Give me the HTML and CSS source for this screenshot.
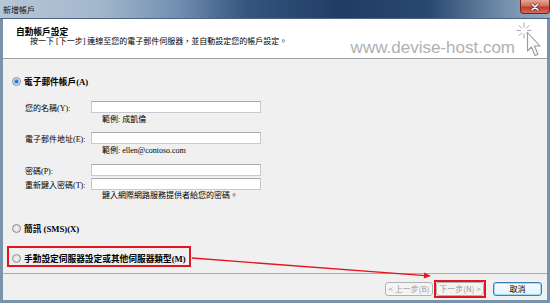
FILE: index.html
```html
<!DOCTYPE html>
<html lang="zh-Hant">
<head>
  <meta charset="UTF-8">
  <title>新增帳戶</title>
  <link rel="stylesheet" href="styles.css">
</head>
<body>
  <div class="window">
    <div class="titlebar">
      <span class="title">新增帳戶</span>
      <span class="close">
        <svg width="10" height="8" viewBox="0 0 10 8">
          <path d="M2 1 L8 7 M8 1 L2 7" stroke="#5a1a14" stroke-width="2.6" stroke-linecap="round"/>
          <path d="M2 1 L8 7 M8 1 L2 7" stroke="#fff" stroke-width="1.6" stroke-linecap="round"/>
        </svg>
      </span>
    </div>

    <div class="client">
      <div class="header">
        <div class="header-title">自動帳戶設定</div>
        <div class="header-desc">按一下 [下一步] 連線至您的電子郵件伺服器，並自動設定您的帳戶設定。</div>
        <div class="watermark">www.devise-host.com</div>
        <!-- cursor logo of the watermark -->
        <svg class="cursor" width="26" height="36" viewBox="0 0 26 36">
          <g stroke="#a8a8a8" stroke-width="1" stroke-linecap="round">
            <path d="M8 1 V5 M8 12 V16 M1 8.5 H4.5 M11.5 8.5 H15 M3 3.5 L5.5 6 M10.5 11 L13 13.5 M13 3.5 L10.5 6 M5.5 11 L3 13.5"/>
          </g>
          <path d="M11.5 10.5 L11.5 29 L15.5 25 L19 33.5 L22 32.3 L18.5 24 L24 24 Z" fill="#fafafa" stroke="#9c9c9c" stroke-width="1.1" stroke-linejoin="round"/>
        </svg>
      </div>

      <div class="body">
        <div class="option"><span class="radio checked"></span>電子郵件帳戶(A)</div>

        <div class="form">
          <div class="field"><span class="label">您的名稱(Y):</span><span class="input"></span></div>
          <div class="hint">範例: 成凱倫</div>
          <div class="field field-email"><span class="label">電子郵件地址(E):</span><span class="input"></span></div>
          <div class="hint">範例: ellen@contoso.com</div>
          <div class="field field-password"><span class="label">密碼(P):</span><span class="input"></span></div>
          <div class="field field-retype"><span class="label">重新鍵入密碼(T):</span><span class="input"></span></div>
          <div class="hint hint-last">鍵入網際網路服務提供者給您的密碼。</div>
        </div>

        <div class="option option-sms"><span class="radio"></span>簡訊 (SMS)(X)</div>

        <div class="marked">
          <div class="option"><span class="radio"></span>手動設定伺服器設定或其他伺服器類型(M)</div>
        </div>
      </div>

      <div class="footer">
        <button class="btn btn-back" disabled>&lt; 上一步(B)</button>
        <span class="mark"><button class="btn" disabled>下一步(N) &gt;</button></span>
        <button class="btn btn-cancel">取消</button>
      </div>
    </div>

    <!-- red annotation arrow -->
    <svg class="annotation" width="550" height="303" viewBox="0 0 550 303">
      <line x1="192" y1="258" x2="425" y2="275.6" stroke="#e3161e" stroke-width="1.4"/>
      <polygon points="431,276 424.2,272.6 423.8,278.6" fill="#e3161e"/>
    </svg>
  </div>
</body>
</html>
```

FILE: styles.css
```css
* {
  box-sizing: border-box;
}
body {
  margin: 0;
  font-family: "Liberation Serif", "Noto Sans CJK TC", serif;
  font-size: 8px;
  color: #000;
  background: #fff;
}
.window {
  position: relative;
  width: 550px;
  height: 303px;
  display: flex;
  flex-direction: column;
  background: #7a93ad;
}
.titlebar {
  height: 19px;
  display: flex;
  align-items: flex-start;
  border-bottom: 1px solid #4a6482;
  background: linear-gradient(to right, #b6c6d8 0%, #a3b7cc 18%, #7290b1 32%, #35557e 45%, #1f3c64 62%, #2a4970 78%, #7590ad 92%, #96abc2 100%);
}
.title {
  padding: 4px 0 0 3px;
  font-family: "Noto Sans CJK TC", sans-serif;
  font-size: 8px;
  line-height: 12px;
  color: #111;
}
.close {
  margin-left: auto;
  width: 30px;
  height: 14px;
  display: flex;
  align-items: center;
  justify-content: center;
  border: 1px solid #6e2a22;
  border-top: none;
  border-radius: 0 0 4px 4px;
  background: linear-gradient(#e6a797, #d46b5c 45%, #c03a2c 55%, #d66b5c);
}
.client {
  flex: 1;
  display: flex;
  flex-direction: column;
  border: solid #7a93ad;
  border-width: 0 3px 3px 3px;
}
.header {
  position: relative;
  height: 40px;
  padding: 8px 0 0 13px;
  background: #fff;
  border-bottom: 1px solid #a0a0a0;
}
.header-title {
  font-family: "Noto Sans CJK TC", sans-serif;
  font-weight: bold;
  font-size: 8.7px;
  line-height: 10px;
}
.header-desc {
  padding-left: 14px;
  line-height: 10px;
}
.watermark {
  position: absolute;
  right: 32px;
  top: 19px;
  font-family: "Liberation Sans", sans-serif;
  font-size: 17px;
  line-height: 20px;
  color: #b0b0b0;
}
.cursor {
  position: absolute;
  left: 513px;
  top: 3px;
}
.body {
  flex: 1;
  padding-top: 16px;
  background: #f0f0f0;
}
.option {
  display: flex;
  align-items: center;
  gap: 3px;
  height: 12px;
  padding-left: 9px;
  font-family: "Liberation Serif", "Noto Sans CJK TC", serif;
  font-weight: bold;
  font-size: 8.7px;
}
.radio {
  width: 9px;
  height: 9px;
  border-radius: 50%;
  border: 1px solid #8e8f8f;
  background: radial-gradient(circle, #f6f6f6, #d2d2d2);
}
.radio.checked {
  background: radial-gradient(circle, #1d5fbf 0, #3d86e0 1.6px, #a9cdf3 2.4px, #eef3f8 3.5px);
}
.option-sms {
  margin-top: 21px;
}
.form {
  margin: 14px 0 0 22px;
}
.field {
  display: flex;
  align-items: center;
  height: 12px;
}
.label {
  width: 66px;
}
.input {
  width: 170px;
  height: 12px;
  background: #fff;
  border: 1px solid #c6c9ce;
  border-top-color: #a7aaaf;
}
.field-email {
  margin-top: 7px;
}
.field-password {
  margin-top: 8px;
}
.field-retype {
  margin-top: 2px;
}
.hint {
  margin-top: 2px;
  padding-left: 77px;
  line-height: 10px;
}
.hint-last {
  margin-top: 1px;
}
.marked {
  width: 184px;
  height: 21px;
  margin: 12px 0 0 4px;
  padding-top: 4px;
  border: 2px solid #e0161e;
}
.marked .option {
  padding-left: 3px;
}
.footer {
  height: 27px;
  display: flex;
  justify-content: flex-end;
  align-items: flex-start;
  padding: 8px 5px 0 0;
  background: #f0f0f0;
  border-top: 1px solid #a9a9a9;
}
.btn {
  width: 48px;
  height: 14px;
  padding: 0;
  border: 1px solid #adb2b5;
  border-radius: 3px;
  background: #f4f4f4;
  font-family: "Noto Sans CJK TC", sans-serif;
  font-size: 8px;
  line-height: 12px;
  color: #9a9a9a;
}
.btn-back {
  margin-right: 1px;
}
.mark {
  display: flex;
  margin-top: -2px;
  border: 2px solid #e0161e;
}
.btn-cancel {
  width: 49px;
  margin-left: 7px;
  border-color: #3c7fb1;
  box-shadow: inset 0 0 0 1px #a4d9f6;
  background: linear-gradient(#f7fbfe, #e3f2fb);
  color: #000;
}
.annotation {
  position: absolute;
  left: 0;
  top: 0;
  pointer-events: none;
}
```
